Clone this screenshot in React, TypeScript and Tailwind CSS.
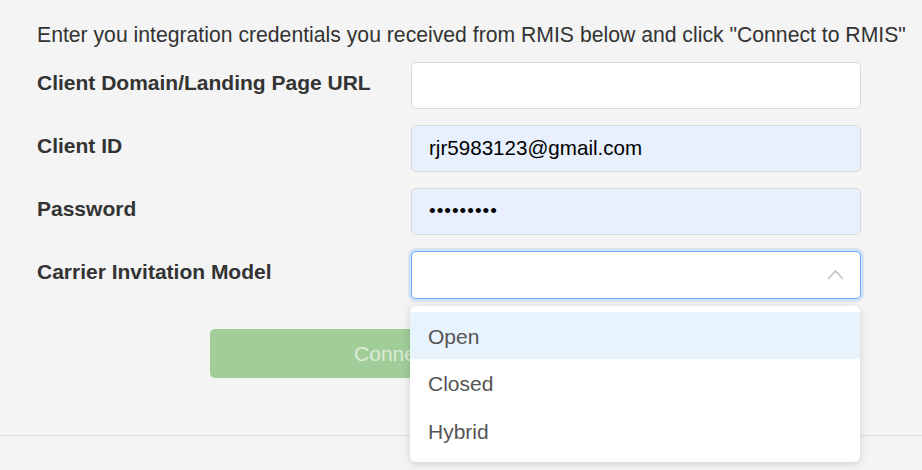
import React from "react";

const font = { fontFamily: '"Liberation Sans", Arial, Helvetica, sans-serif' };

function Row({ label, children }: { label: string; children: React.ReactNode }) {
  return (
    <div className="flex items-center h-[47px]">
      <div className="w-[374px] shrink-0 font-bold text-[21px] leading-[24px] text-[#333] -mt-[5px] whitespace-nowrap">{label}</div>
      {children}
    </div>
  );
}

export default function App() {
  return (
    <div className="w-[922px] h-[470px] bg-[#f4f4f4] relative overflow-hidden" style={font}>
      <div className="h-[436px] border-b border-[#dedede] pl-[37px] pt-[21px]">
        <p className="text-[21.2px] text-[#333] leading-[28px] whitespace-nowrap">
          Enter you integration credentials you received from RMIS below and click "Connect to RMIS"
        </p>
        <div className="mt-[13px] flex flex-col gap-[16px]">
          <Row label="Client Domain/Landing Page URL">
            <div className="w-[450px] h-[47px] bg-white border border-[#d8d8d8] rounded-[5px]" />
          </Row>
          <Row label="Client ID">
            <div className="w-[450px] h-[47px] bg-[#e8f0fe] border border-[#d8d8d8] rounded-[5px] flex items-center pl-[17px] text-[20.6px] text-black">
              rjr5983123@gmail.com
            </div>
          </Row>
          <Row label="Password">
            <div className="w-[450px] h-[47px] bg-[#e8f0fe] border border-[#d8d8d8] rounded-[5px] flex items-center pl-[17px] text-[19px] text-black tracking-[1px]">
              •••••••••
            </div>
          </Row>
          <Row label="Carrier Invitation Model">
            <div className="relative w-[450px] h-[48px] bg-white border border-[#66a8f5] rounded-[5px] shadow-[0_0_0_3px_#d3e2f6] flex items-center justify-end pr-[16px]">
              <svg width="17" height="11" viewBox="0 0 17 11" fill="none">
                <path d="M1 10 L8.5 2 L16 10" stroke="#bdbdbd" strokeWidth="1.4" />
              </svg>
            </div>
          </Row>
        </div>
        <div className="mt-[31px] ml-[173px] w-[448px] h-[49px] rounded-[5px] bg-[#a1cd98] flex items-center justify-center text-[21px] text-[#dcebd8]">
          Connect to RMIS
        </div>
      </div>
      <div className="absolute left-[410px] top-[306px] w-[450px] h-[156px] bg-white rounded-[6px] shadow-[0_2px_8px_rgba(0,0,0,0.15)] pt-[6px] text-[21px] text-[#555]">
        <div className="h-[47px] bg-[#e8f4fd] flex items-center pl-[18px] pt-[2px]">Open</div>
        <div className="h-[48px] flex items-center pl-[18px] pt-[2px]">Closed</div>
        <div className="h-[48px] flex items-center pl-[18px] pt-[2px]">Hybrid</div>
      </div>
    </div>
  );
}
